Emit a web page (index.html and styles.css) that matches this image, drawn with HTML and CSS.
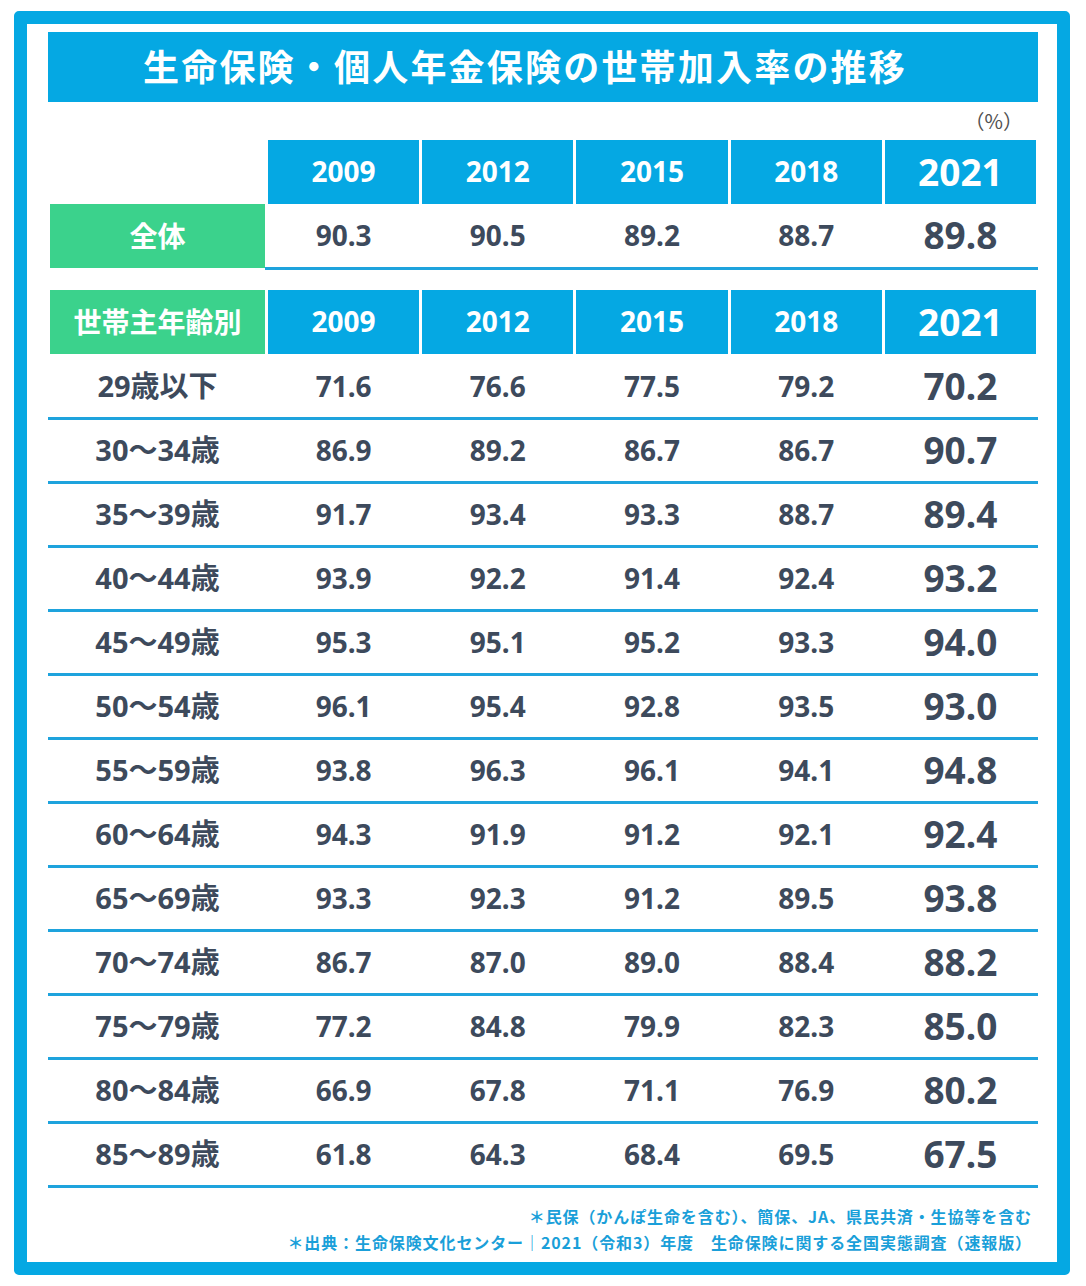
FILE: index.html
```html
<!DOCTYPE html>
<html lang="ja">
<head>
<meta charset="utf-8">
<title>生命保険・個人年金保険の世帯加入率の推移</title>
<link rel="stylesheet" href="styles.css">
</head>
<body>
<div class="frame">
  <div class="title">生命保険・個人年金保険の世帯加入率の推移</div>
  <div class="unit">（%）</div>

  <div class="row head">
    <div class="blank"></div>
    <div class="year">2009</div>
    <div class="year">2012</div>
    <div class="year">2015</div>
    <div class="year">2018</div>
    <div class="year big">2021</div>
  </div>

  <div class="total">
    <div class="label">全体</div>
    <div class="vals">
      <div class="v">90.3</div>
      <div class="v">90.5</div>
      <div class="v">89.2</div>
      <div class="v">88.7</div>
      <div class="v big">89.8</div>
    </div>
  </div>

  <div class="row head head2">
    <div class="label">世帯主年齢別</div>
    <div class="year">2009</div>
    <div class="year">2012</div>
    <div class="year">2015</div>
    <div class="year">2018</div>
    <div class="year big">2021</div>
  </div>

  <div class="row data first"><div class="age">29歳以下</div><div class="v">71.6</div><div class="v">76.6</div><div class="v">77.5</div><div class="v">79.2</div><div class="v big">70.2</div></div>
  <div class="row data"><div class="age">30〜34歳</div><div class="v">86.9</div><div class="v">89.2</div><div class="v">86.7</div><div class="v">86.7</div><div class="v big">90.7</div></div>
  <div class="row data"><div class="age">35〜39歳</div><div class="v">91.7</div><div class="v">93.4</div><div class="v">93.3</div><div class="v">88.7</div><div class="v big">89.4</div></div>
  <div class="row data"><div class="age">40〜44歳</div><div class="v">93.9</div><div class="v">92.2</div><div class="v">91.4</div><div class="v">92.4</div><div class="v big">93.2</div></div>
  <div class="row data"><div class="age">45〜49歳</div><div class="v">95.3</div><div class="v">95.1</div><div class="v">95.2</div><div class="v">93.3</div><div class="v big">94.0</div></div>
  <div class="row data"><div class="age">50〜54歳</div><div class="v">96.1</div><div class="v">95.4</div><div class="v">92.8</div><div class="v">93.5</div><div class="v big">93.0</div></div>
  <div class="row data"><div class="age">55〜59歳</div><div class="v">93.8</div><div class="v">96.3</div><div class="v">96.1</div><div class="v">94.1</div><div class="v big">94.8</div></div>
  <div class="row data"><div class="age">60〜64歳</div><div class="v">94.3</div><div class="v">91.9</div><div class="v">91.2</div><div class="v">92.1</div><div class="v big">92.4</div></div>
  <div class="row data"><div class="age">65〜69歳</div><div class="v">93.3</div><div class="v">92.3</div><div class="v">91.2</div><div class="v">89.5</div><div class="v big">93.8</div></div>
  <div class="row data"><div class="age">70〜74歳</div><div class="v">86.7</div><div class="v">87.0</div><div class="v">89.0</div><div class="v">88.4</div><div class="v big">88.2</div></div>
  <div class="row data"><div class="age">75〜79歳</div><div class="v">77.2</div><div class="v">84.8</div><div class="v">79.9</div><div class="v">82.3</div><div class="v big">85.0</div></div>
  <div class="row data"><div class="age">80〜84歳</div><div class="v">66.9</div><div class="v">67.8</div><div class="v">71.1</div><div class="v">76.9</div><div class="v big">80.2</div></div>
  <div class="row data"><div class="age">85〜89歳</div><div class="v">61.8</div><div class="v">64.3</div><div class="v">68.4</div><div class="v">69.5</div><div class="v big">67.5</div></div>

  <div class="notes">
    <p>＊民保（かんぽ生命を含む）、簡保、JA、県民共済・生協等を含む</p>
    <p>＊出典：生命保険文化センター｜2021（令和3）年度　生命保険に関する全国実態調査（速報版）</p>
  </div>
</div>
</body>
</html>
```

FILE: styles.css
```css
* { box-sizing: border-box; }

body {
  margin: 0;
  background: #ffffff;
  font-family: "Noto Sans", "Noto Sans CJK JP", sans-serif;
  color: #3d4a5c;
}

.frame {
  margin: 11px 0 0 14px;
  width: 1056px;
  height: 1264px;
  border: 13px solid #05a8e3;
  border-radius: 5px;
  padding: 8px 19px 0 21px;
}

.title {
  height: 70px;
  background: #05a8e3;
  color: #ffffff;
  font-family: "Noto Sans CJK JP", sans-serif;
  font-weight: 700;
  font-size: 36px;
  letter-spacing: 2.2px;
  display: flex;
  align-items: center;
  justify-content: center;
  padding: 0 36px 5px 0;
}

.unit {
  height: 38px;
  line-height: 38px;
  text-align: right;
  padding-right: 15px;
  font-size: 20px;
  color: #505050;
  font-family: "Noto Sans CJK JP", sans-serif;
}

.row {
  display: grid;
  grid-template-columns: 215px repeat(5, 1fr);
  column-gap: 3px;
  padding: 0 2px;
}

.head { height: 64px; }

.year {
  background: #05a8e3;
  color: #ffffff;
  font-weight: 700;
  font-size: 28px;
  display: flex;
  align-items: center;
  justify-content: center;
  padding-bottom: 2px;
}

.year.big { font-size: 37px; }

.label {
  background: #3bd28c;
  color: #ffffff;
  font-family: "Noto Sans CJK JP", sans-serif;
  font-weight: 700;
  font-size: 28px;
  display: flex;
  align-items: center;
  justify-content: center;
  padding-bottom: 2px;
}

.total {
  display: flex;
  height: 66px;
  padding-left: 2px;
  align-items: flex-start;
}

.total .label {
  width: 215px;
  height: 64px;
}

.vals {
  flex: 1;
  height: 66px;
  display: grid;
  grid-template-columns: repeat(5, 1fr);
  column-gap: 3px;
  padding: 0 2px 2px 3px;
  border-bottom: 3px solid #1ea3dd;
}

.head2 { margin-top: 20px; }

.v {
  font-weight: 700;
  font-size: 28px;
  display: flex;
  align-items: center;
  justify-content: center;
}

.v.big { font-size: 37px; }

.data {
  height: 64px;
  border-bottom: 3px solid #1ea3dd;
  padding-bottom: 2px;
}

.data.first {
  height: 66px;
  padding-top: 2px;
}

.age {
  font-weight: 700;
  font-size: 29px;
  display: flex;
  align-items: center;
  justify-content: center;
  padding-bottom: 4px;
}

.notes {
  margin-top: 15px;
  padding-right: 6px;
  text-align: right;
  color: #1a9fd9;
  font-family: "Noto Sans CJK JP", sans-serif;
  font-weight: 700;
  font-size: 16px;
  letter-spacing: 0.9px;
}

.notes p {
  margin: 0;
  line-height: 26px;
}
```
